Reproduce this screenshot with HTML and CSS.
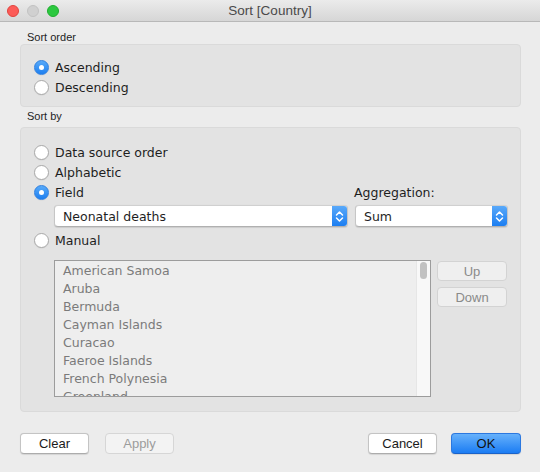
FILE: index.html
```html
<!DOCTYPE html>
<html>
<head>
<meta charset="utf-8">
<link rel="stylesheet" href="styles.css">
</head>
<body>
<div class="window">
  <div class="titlebar">
    <div class="lights">
      <span class="light red"></span>
      <span class="light gray"></span>
      <span class="light green"></span>
    </div>
    <div class="title">Sort [Country]</div>
    <div></div>
  </div>
  <div class="content">
    <div class="section-label">Sort order</div>
    <div class="group group-order">
      <div class="row"><span class="radio on"></span><span class="rlabel">Ascending</span></div>
      <div class="row"><span class="radio"></span><span class="rlabel">Descending</span></div>
    </div>
    <div class="section-label second">Sort by</div>
    <div class="group group-by">
      <div class="row"><span class="radio"></span><span class="rlabel">Data source order</span></div>
      <div class="row"><span class="radio"></span><span class="rlabel">Alphabetic</span></div>
      <div class="row field-row">
        <div class="field-left"><span class="radio on"></span><span class="rlabel">Field</span></div>
        <span class="rlabel">Aggregation:</span>
      </div>
      <div class="selects">
        <div class="select wide"><span class="sel-text">Neonatal deaths</span><span class="sel-arrow"><svg width="9" height="13" viewBox="0 0 9 13"><path d="M1.5 5 L4.5 2 L7.5 5 M1.5 8 L4.5 11 L7.5 8" fill="none" stroke="#fff" stroke-width="1.5" stroke-linecap="round" stroke-linejoin="round"/></svg></span></div>
        <div class="select narrow"><span class="sel-text">Sum</span><span class="sel-arrow"><svg width="9" height="13" viewBox="0 0 9 13"><path d="M1.5 5 L4.5 2 L7.5 5 M1.5 8 L4.5 11 L7.5 8" fill="none" stroke="#fff" stroke-width="1.5" stroke-linecap="round" stroke-linejoin="round"/></svg></span></div>
      </div>
      <div class="row manual-row"><span class="radio"></span><span class="rlabel">Manual</span></div>
      <div class="manual">
        <div class="listbox">
          <div class="items">
            <div class="item">American Samoa</div>
            <div class="item">Aruba</div>
            <div class="item">Bermuda</div>
            <div class="item">Cayman Islands</div>
            <div class="item">Curacao</div>
            <div class="item">Faeroe Islands</div>
            <div class="item">French Polynesia</div>
            <div class="item">Greenland</div>
          </div>
          <div class="scrolltrack"><div class="thumb"></div></div>
        </div>
        <div class="updown">
          <div class="btn small">Up</div>
          <div class="btn small">Down</div>
        </div>
      </div>
    </div>
    <div class="footer">
      <div class="btn push">Clear</div>
      <div class="btn push disabled">Apply</div>
      <div class="spacer"></div>
      <div class="btn push">Cancel</div>
      <div class="btn push primary">OK</div>
    </div>
  </div>
</div>
</body>
</html>
```

FILE: styles.css
```css
* { box-sizing: border-box; }
html, body { margin: 0; padding: 0; }
body {
  background: #ececec;
  width: 540px;
  height: 472px;
  overflow: hidden;
  font-family: "DejaVu Sans", sans-serif;
  font-size: 12.5px;
  color: #1e1e1e;
}
.window { width: 540px; height: 472px; }

.titlebar {
  height: 22px;
  display: grid;
  grid-template-columns: 1fr auto 1fr;
  align-items: center;
  background: linear-gradient(#ebebeb, #d6d6d6);
  border-bottom: 1px solid #b8b8b8;
}
.lights { display: flex; gap: 8px; padding-left: 7px; }
.light { width: 12px; height: 12px; border-radius: 50%; display: block; }
.light.red { background: #fc5b57; border: 1px solid #e0443e; }
.light.gray { background: #d0d0d0; border: 1px solid #c2c2c2; }
.light.green { background: #2cc840; border: 1px solid #1fae2e; }
.title {
  font-family: "Liberation Sans", sans-serif;
  font-size: 13.5px;
  color: #4a4a4a;
}

.content { padding: 0 19px 0 20px; }
.section-label {
  font-family: "Liberation Sans", sans-serif;
  font-size: 11px;
  color: #1e1e1e;
  padding: 9px 0 0 7px;
  height: 22px;
  line-height: 12px;
}
.section-label.second { padding-top: 3px; height: 20px; }

.group {
  background: #e3e3e3;
  border: 1px solid #dadada;
  border-radius: 4px;
}
.group-order { height: 63px; padding: 12px 0 0 13px; }
.group-by { height: 285px; padding: 14px 0 0 13px; }

.row { display: flex; align-items: center; height: 20px; }
.radio {
  width: 15px; height: 15px;
  border-radius: 50%;
  background: #fff;
  border: 1px solid #a9a9a9;
  box-shadow: 0 0.5px 1px rgba(0,0,0,0.08);
  flex: none;
  position: relative;
}
.radio.on {
  background: linear-gradient(#58aaf9, #1d7ff0);
  border-color: #2f80e0;
}
.radio.on::after {
  content: "";
  position: absolute;
  left: 4px; top: 4px;
  width: 5px; height: 5px;
  border-radius: 50%;
  background: #fff;
}
.rlabel { margin-left: 6px; white-space: nowrap; }

.field-row { height: 21px; }
.field-left { display: flex; align-items: center; width: 320px; }
.field-left + .rlabel { margin-left: 0; }

.selects {
  display: flex;
  gap: 7px;
  margin: 2px 0 0 20px;
  height: 22px;
}
.select {
  display: flex;
  align-items: center;
  height: 22px;
  background: #fff;
  border: 1px solid #c6c6c6;
  border-top-color: #d0d0d0;
  border-bottom-color: #b0b0b0;
  border-radius: 4px;
  box-shadow: 0 0.5px 1px rgba(0,0,0,0.1);
  overflow: hidden;
}
.select.wide { width: 294px; }
.select.narrow { width: 153px; }
.sel-text { flex: 1; padding-left: 8px; }
.sel-arrow {
  width: 15px; height: 100%;
  background: linear-gradient(#59a9fa, #1c7ef1);
  display: flex; align-items: center; justify-content: center;
}

.manual-row { margin-top: 3px; }
.manual {
  display: flex;
  gap: 6px;
  margin: 10px 0 0 20px;
}
.listbox {
  width: 377px;
  height: 137px;
  border: 1px solid #9c9c9c;
  background: #eeeeee;
  display: flex;
  overflow: hidden;
}
.items { flex: 1; padding: 1px 0 0 8px; }
.item {
  height: 18px;
  line-height: 18px;
  color: #7b7b7b;
  white-space: nowrap;
}
.scrolltrack {
  width: 14px;
  background: #f8f8f8;
  border-left: 1px solid #e6e6e6;
  padding: 1px 0 0 3px;
}
.thumb {
  width: 7px; height: 17px;
  border-radius: 4px;
  background: #c1c1c1;
}
.updown { display: flex; flex-direction: column; gap: 6px; padding-top: 1px; }

.btn {
  font-family: "Liberation Sans", sans-serif;
  font-size: 13px;
  display: flex; align-items: center; justify-content: center;
  border-radius: 4px;
}
.btn.small {
  width: 70px; height: 20px;
  background: #efefef;
  border: 1px solid #d3d3d3;
  color: #8a8a8a;
}

.footer {
  display: flex;
  align-items: center;
  margin-top: 21px;
  gap: 16px;
}
.spacer { flex: 1; }
.btn.push {
  height: 21px;
  width: 69px;
  background: #fff;
  border: 1px solid #c4c4c4;
  border-bottom-color: #acacac;
  box-shadow: 0 0.5px 1px rgba(0,0,0,0.1);
  color: #1a1a1a;
}
.btn.push.disabled {
  background: #f3f3f3;
  border-color: #d6d6d6;
  color: #9c9c9c;
  box-shadow: none;
}
.btn.push.primary {
  margin-left: -2px;
  width: 70px;
  background: linear-gradient(#66b1fb, #1b7cf3);
  border-color: #2b78e0;
  border-bottom-color: #1a62c8;
  color: #111;
}
```
